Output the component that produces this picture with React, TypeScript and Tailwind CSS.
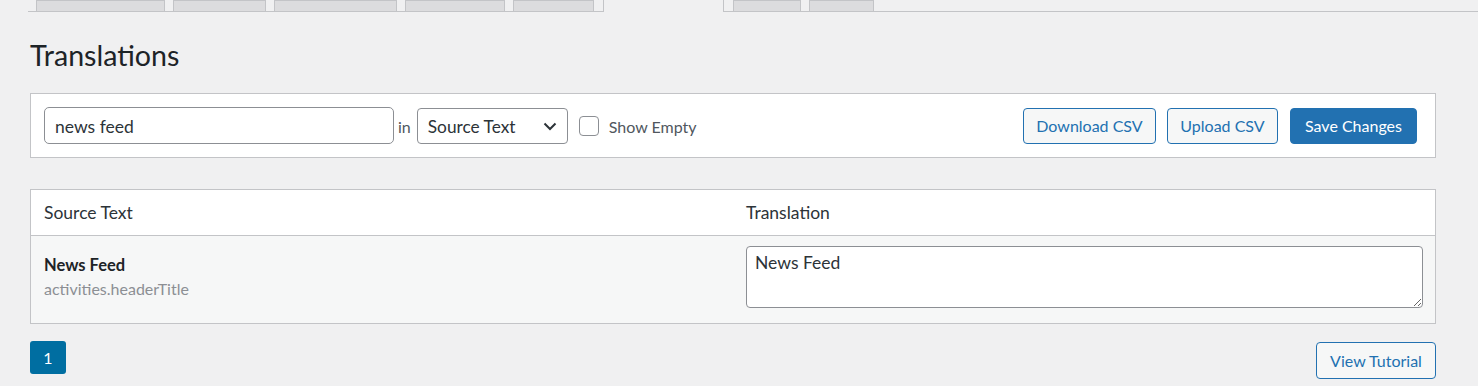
import React from "react";

const tabs = [
  { w: 129, ml: 8 },
  { w: 93, ml: 8 },
  { w: 123, ml: 8 },
  { w: 100, ml: 8 },
  { w: 81, ml: 8 },
];
const tabsRight = [
  { w: 68, ml: 9 },
  { w: 65, ml: 8 },
];

function Tab({ w, ml }: { w: number; ml: number }) {
  return (
    <div
      className="h-[11px] border-x border-t border-[#c3c4c7] bg-[#dcdcde]"
      style={{ width: w, marginLeft: ml }}
    />
  );
}

export default function App() {
  return (
    <div className="min-h-[386px] bg-[#f0f0f1] text-[#1d2327] font-[Lato,'Noto_Sans',sans-serif]">
      {/* Tabs */}
      <div className="ml-[28px] flex h-[12px] border-b border-[#c3c4c7]">
        {tabs.map((t, i) => (
          <Tab key={i} w={t.w} ml={t.ml} />
        ))}
        <div className="-mb-px ml-[9px] h-[12px] w-[121px] border-x border-[#c3c4c7] bg-[#f0f0f1]" />
        {tabsRight.map((t, i) => (
          <Tab key={i} w={t.w} ml={t.ml} />
        ))}
      </div>

      <div className="pl-[30px] pr-[42px]">
        <h1 className="mt-[25px] text-[28.6px] font-normal leading-[36px] text-[#1d2327]">
          Translations
        </h1>

        {/* Filter bar */}
        <div className="mt-[20px] flex h-[65px] items-center border border-[#c3c4c7] bg-white pl-[13px] pr-[18px]">
          <div className="flex h-[37px] w-[350px] items-center rounded-[5px] border border-[#8c8f94] px-[10px] pt-[3px] text-[17.5px] text-[#2c3338]">
            news feed
          </div>
          <span className="ml-[4px] pt-[2px] text-[16px] text-[#50575e]">in</span>
          <div className="ml-[6px] flex h-[36px] w-[151px] items-center justify-between rounded-[4px] border border-[#8c8f94] pl-[10px] pr-[9px] text-[17.3px] text-[#2c3338]">
            <span className="pt-[3px]">Source Text</span>
            <svg width="16" height="16" viewBox="0 0 16 16" fill="none">
              <path d="M2.5 5.5 L8 11 L13.5 5.5" stroke="#2c3338" strokeWidth="2" />
            </svg>
          </div>
          <div className="ml-[11px] h-[20px] w-[20px] rounded-[4px] border border-[#8c8f94] bg-white" />
          <span className="ml-[10px] pt-[2px] text-[16px] text-[#50575e]">Show Empty</span>

          <div className="ml-auto flex items-center">
            <button className="flex h-[36px] w-[133px] items-center justify-center rounded-[4px] border border-[#2271b1] bg-[#f6f7f7] pt-px text-[16px] text-[#2271b1]">
              Download CSV
            </button>
            <button className="ml-[11px] flex h-[36px] w-[111px] items-center justify-center rounded-[4px] border border-[#2271b1] bg-[#f6f7f7] pt-px text-[16px] text-[#2271b1]">
              Upload CSV
            </button>
            <button className="ml-[12px] flex h-[36px] w-[127px] items-center justify-center rounded-[4px] border border-[#2271b1] bg-[#2271b1] pt-px text-[16px] text-white">
              Save Changes
            </button>
          </div>
        </div>

        {/* Table */}
        <div className="mt-[31px] border border-[#c3c4c7]">
          <div className="grid h-[46px] grid-cols-2 items-center border-b border-[#c3c4c7] bg-white pt-[2px] text-[17.5px] text-[#2c3338]">
            <div className="px-[13px]">Source Text</div>
            <div className="px-[13px]">Translation</div>
          </div>
          <div className="grid h-[87px] grid-cols-2 bg-[#f6f7f7]">
            <div className="px-[13px] pt-[18px] leading-[23px]">
              <div className="text-[16.5px] font-bold text-[#1d2327]">News Feed</div>
              <div className="text-[16px] text-[#8c8f94]">activities.headerTitle</div>
            </div>
            <div className="pl-[13px] pr-[12px] pt-[10px]">
              <textarea
                defaultValue="News Feed"
                className="block h-[62px] w-full rounded-[4px] border border-[#8c8f94] bg-white px-[8px] py-[4px] text-[17.5px] leading-[24px] text-[#2c3338] outline-none"
              />
            </div>
          </div>
        </div>

        {/* Footer */}
        <div className="mt-[17px] flex items-start justify-between">
          <div className="flex h-[33px] w-[36px] items-center justify-center rounded-[3px] bg-[#006ea1] text-[16px] text-white">
            1
          </div>
          <button className="mt-px flex h-[37px] w-[120px] items-center justify-center rounded-[4px] border border-[#2271b1] bg-[#f6f7f7] pt-px text-[16px] text-[#2271b1]">
            View Tutorial
          </button>
        </div>
      </div>
    </div>
  );
}
